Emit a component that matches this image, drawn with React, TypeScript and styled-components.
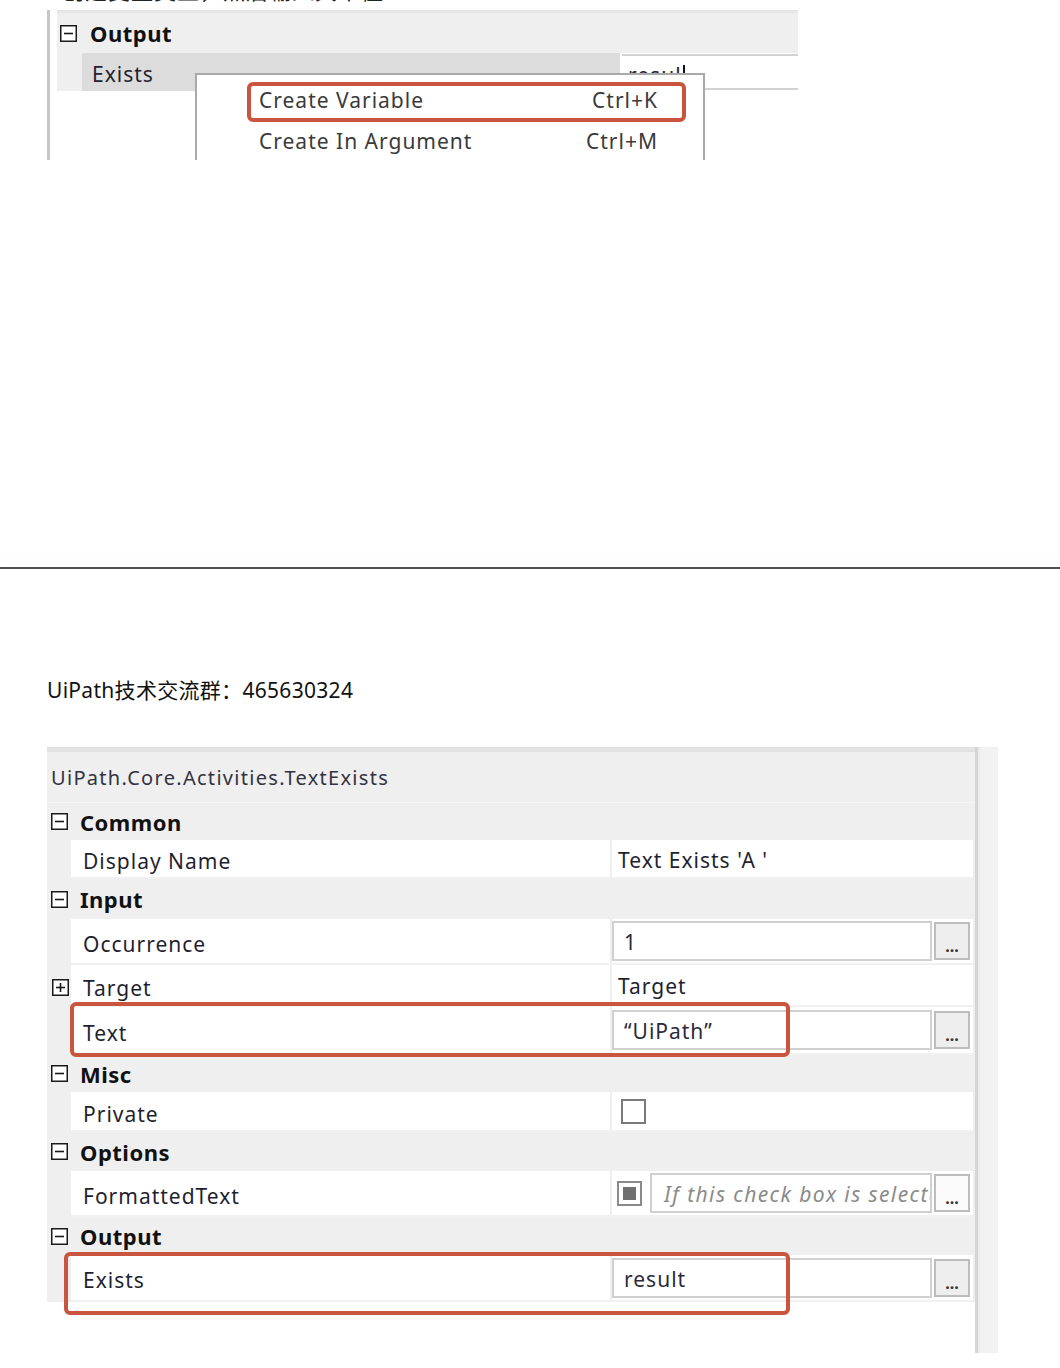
import React, { FC } from 'react';
import styled, { createGlobalStyle } from 'styled-components';

const GlobalStyle = createGlobalStyle`
  html, body {
    margin: 0;
    padding: 0;
    background: #ffffff;
  }
  body {
    font-family: "Noto Sans", "Noto Sans CJK SC", sans-serif;
    color: #1d1d2b;
  }
`;

const Page = styled.div`
  width: 1060px;
  display: flex;
  flex-direction: column;
`;

/* ---------- top (cropped) screenshot ---------- */

const TopShot = styled.div`
  position: relative;
  height: 160px;
  overflow: hidden;
  letter-spacing: 1px;
`;

const CutLine = styled.div`
  height: 5px;
  overflow: hidden;
  padding-left: 62px;
  p {
    margin: -25px 0 0;
    font-size: 22px;
    line-height: 30px;
    color: #222;
    white-space: nowrap;
  }
`;

const MiniGrid = styled.div`
  margin: 5px 0 0 47px;
  width: 751px;
  height: 150px;
  border-left: 3px solid #c6c6c6;
  padding-left: 7px;
  box-sizing: border-box;
`;

const MiniCategory = styled.div`
  height: 43px;
  box-sizing: border-box;
  border-top: 3px solid #e6e6e6;
  background: #efefef;
  display: flex;
  align-items: center;
  gap: 13px;
  padding-left: 3px;
  strong {
    font-size: 22px;
    color: #111;
    letter-spacing: 0.5px;
  }
`;

const MiniRow = styled.div`
  height: 38px;
  display: flex;
`;

const MiniGutter = styled.div`
  width: 25px;
  background: #efefef;
`;

const MiniLabel = styled.div`
  width: 538px;
  background: #dcdcdc;
  padding: 4px 0 0 10px;
  box-sizing: border-box;
  display: flex;
  align-items: center;
  font-size: 21px;
  color: #22222e;
`;

const MiniValue = styled.div`
  flex: 1;
  margin-left: 2px;
  border-top: 2px solid #d2d2d2;
  border-bottom: 2px solid #d2d2d2;
  margin-top: 1px;
  height: 36px;
  box-sizing: border-box;
  padding: 5px 0 0 6px;
  font-size: 21px;
  color: #22222e;
  display: flex;
  align-items: center;
  span {
    border-right: 2px solid #111;
    padding-right: 1px;
    line-height: 20px;
  }
`;

const Menu = styled.div`
  position: absolute;
  left: 195px;
  top: 73px;
  width: 510px;
  height: 120px;
  background: #ffffff;
  border: 2px solid #a9a9a9;
  box-sizing: border-box;
  padding-top: 4px;
`;

const MenuItem = styled.div`
  position: relative;
  height: 41px;
  display: flex;
  align-items: center;
  justify-content: space-between;
  padding: 0 45px 0 62px;
  font-size: 21px;
  color: #3a3a3a;
`;

const Highlight = styled.div<{ $l: number; $t: number; $w: number; $h: number }>`
  position: absolute;
  left: ${(p) => p.$l}px;
  top: ${(p) => p.$t}px;
  width: ${(p) => p.$w}px;
  height: ${(p) => p.$h}px;
  border: 4px solid #c9553f;
  border-radius: 6px;
  box-sizing: border-box;
  pointer-events: none;
  z-index: 2;
`;

/* ---------- divider + caption ---------- */

const Rule = styled.div`
  margin-top: 407px;
  height: 2px;
  background: #4f4f4f;
  box-shadow: 0 -5px 8px rgba(0, 0, 0, 0.05);
`;

const Caption = styled.p`
  margin: 106px 0 0 47px;
  font-size: 21px;
  line-height: 30px;
  letter-spacing: 0.3px;
  color: #111;
`;

/* ---------- property grid ---------- */

const Panel = styled.div`
  margin: 42px 0 0 47px;
  width: 951px;
  height: 606px;
  display: grid;
  grid-template-columns: 928px 3px 2px 18px;
`;

const Main = styled.div`
  display: flex;
  flex-direction: column;
  background: #ffffff;
`;

const ScrollLine = styled.div`
  background: #d5d5d5;
`;

const ScrollGap = styled.div`
  background: #ebebeb;
`;

const ScrollBand = styled.div`
  background: #f2f2f2;
`;

const Sheet = styled.div`
  background: #efefef;
  border-top: 4px solid #e3e3e3;
  letter-spacing: 1px;
`;

const Header = styled.div`
  height: 52px;
  box-sizing: border-box;
  border-top: 1px solid #e0e0e0;
  border-bottom: 1px solid #f6f6f6;
  padding-left: 4px;
  display: flex;
  align-items: center;
  font-size: 20px;
  letter-spacing: 1.3px;
  color: #333340;
`;

const Category = styled.div<{ $h: number }>`
  height: ${(p) => p.$h}px;
  display: flex;
  align-items: center;
  gap: 12px;
  padding-left: 4px;
  font-size: 22px;
  font-weight: 700;
  letter-spacing: 0.5px;
  color: #111;
`;

const Row = styled.div<{ $h: number }>`
  position: relative;
  height: ${(p) => p.$h}px;
  display: flex;
`;

const Gutter = styled.div`
  width: 24px;
  display: flex;
  align-items: center;
  padding: 3px 0 0 5px;
  box-sizing: border-box;
`;

const Cells = styled.div`
  width: 902px;
  display: flex;
  background: #ffffff;
  border-bottom: 2px solid #f1f1f1;
  box-sizing: border-box;
`;

const LabelCell = styled.div`
  width: 541px;
  padding: 5px 0 0 12px;
  box-sizing: border-box;
  border-right: 2px solid #efefef;
  display: flex;
  align-items: center;
  font-size: 21px;
  color: #1f1f30;
`;

const ValueCell = styled.div<{ $pad?: number; $text?: boolean }>`
  flex: 1;
  display: flex;
  align-items: center;
  gap: 2px;
  padding-left: ${(p) => p.$pad ?? 0}px;
  padding-top: ${(p) => (p.$text ? 2 : 0)}px;
  font-size: 21px;
  color: #1f1f30;
  min-width: 0;
`;

const TextBox = styled.div<{ $w: number; $italic?: boolean }>`
  width: ${(p) => p.$w}px;
  height: 40px;
  box-sizing: border-box;
  border: 2px solid #d0d0d0;
  background: #fff;
  padding: 2px 0 0 ${(p) => (p.$italic ? 12 : 10)}px;
  display: flex;
  align-items: center;
  overflow: hidden;
  white-space: nowrap;
  font-size: 21px;
  letter-spacing: ${(p) => (p.$italic ? 1.4 : 1)}px;
  font-style: ${(p) => (p.$italic ? 'italic' : 'normal')};
  color: ${(p) => (p.$italic ? '#8a8a8a' : '#2a2a3a')};
`;

const DotsButton = styled.div<{ $light?: boolean }>`
  width: 36px;
  height: 38px;
  box-sizing: border-box;
  border: 2px solid #bdbdbd;
  background: ${(p) => (p.$light ? '#fbfbfb' : '#eeeeee')};
  display: flex;
  align-items: flex-end;
  justify-content: center;
  padding-bottom: 7px;
  font-size: 16px;
  font-weight: 700;
  line-height: 10px;
  letter-spacing: 0;
  color: #333;
`;

const CheckBox = styled.div<{ $checked?: boolean }>`
  width: 25px;
  height: 25px;
  box-sizing: border-box;
  border: 2px solid ${(p) => (p.$checked ? '#8a8a8a' : '#7a7a7a')};
  background: #fff;
  padding: 4px;
  margin-right: ${(p) => (p.$checked ? 6 : 0)}px;
  &::after {
    content: '';
    display: ${(p) => (p.$checked ? 'block' : 'none')};
    width: 100%;
    height: 100%;
    background: #707070;
  }
`;

const Expander: FC<{ open?: boolean }> = ({ open = true }) => (
  <svg width="17" height="17" viewBox="0 0 17 17">
    <rect x="0.75" y="0.75" width="15.5" height="15.5" fill="#fff" stroke="#1a1a1a" strokeWidth="1.5" />
    <line x1="4" y1="8.5" x2="13" y2="8.5" stroke="#1a1a1a" strokeWidth="1.6" />
    {!open && <line x1="8.5" y1="4" x2="8.5" y2="13" stroke="#1a1a1a" strokeWidth="1.6" />}
  </svg>
);

const App: FC = () => (
  <Page>
    <GlobalStyle />

    <TopShot>
      <CutLine>
        <p>创建变量类型，然后输入其中值</p>
      </CutLine>
      <MiniGrid>
        <MiniCategory>
          <Expander />
          <strong>Output</strong>
        </MiniCategory>
        <MiniRow>
          <MiniGutter />
          <MiniLabel>Exists</MiniLabel>
          <MiniValue>
            <span>resul</span>
          </MiniValue>
        </MiniRow>
      </MiniGrid>
      <Menu>
        <MenuItem>
          <span>Create Variable</span>
          <span>Ctrl+K</span>
          <Highlight $l={50} $t={3} $w={439} $h={40} />
        </MenuItem>
        <MenuItem>
          <span>Create In Argument</span>
          <span>Ctrl+M</span>
        </MenuItem>
      </Menu>
    </TopShot>

    <Rule />

    <Caption>UiPath技术交流群：465630324</Caption>

    <Panel>
      <Main>
        <Sheet>
          <Header>UiPath.Core.Activities.TextExists</Header>

          <Category $h={37}>
            <Expander />
            Common
          </Category>
          <Row $h={39}>
            <Gutter />
            <Cells>
              <LabelCell>Display Name</LabelCell>
              <ValueCell $pad={6} $text>Text Exists 'A '</ValueCell>
            </Cells>
          </Row>

          <Category $h={40}>
            <Expander />
            Input
          </Category>
          <Row $h={46}>
            <Gutter />
            <Cells>
              <LabelCell>Occurrence</LabelCell>
              <ValueCell>
                <TextBox $w={320}>1</TextBox>
                <DotsButton>...</DotsButton>
              </ValueCell>
            </Cells>
          </Row>
          <Row $h={42}>
            <Gutter>
              <Expander open={false} />
            </Gutter>
            <Cells>
              <LabelCell>Target</LabelCell>
              <ValueCell $pad={6} $text>Target</ValueCell>
            </Cells>
          </Row>
          <Row $h={48}>
            <Gutter />
            <Cells>
              <LabelCell>Text</LabelCell>
              <ValueCell>
                <TextBox $w={320}>“UiPath”</TextBox>
                <DotsButton>...</DotsButton>
              </ValueCell>
            </Cells>
            <Highlight $l={23} $t={-5} $w={720} $h={55} />
          </Row>

          <Category $h={37}>
            <Expander />
            Misc
          </Category>
          <Row $h={40}>
            <Gutter />
            <Cells>
              <LabelCell>Private</LabelCell>
              <ValueCell $pad={9}>
                <CheckBox />
              </ValueCell>
            </Cells>
          </Row>

          <Category $h={39}>
            <Expander />
            Options
          </Category>
          <Row $h={46}>
            <Gutter />
            <Cells>
              <LabelCell>FormattedText</LabelCell>
              <ValueCell $pad={5}>
                <CheckBox $checked />
                <TextBox $w={282} $italic>
                  If this check box is selected, the returned string contains formatting
                </TextBox>
                <DotsButton $light>...</DotsButton>
              </ValueCell>
            </Cells>
          </Row>

          <Category $h={38}>
            <Expander />
            Output
          </Category>
          <Row $h={47}>
            <Gutter />
            <Cells>
              <LabelCell>Exists</LabelCell>
              <ValueCell>
                <TextBox $w={320}>result</TextBox>
                <DotsButton>...</DotsButton>
              </ValueCell>
            </Cells>
            <Highlight $l={17} $t={-3} $w={726} $h={63} />
          </Row>
        </Sheet>
      </Main>
      <ScrollLine />
      <ScrollGap />
      <ScrollBand />
    </Panel>
  </Page>
);

export default App;
